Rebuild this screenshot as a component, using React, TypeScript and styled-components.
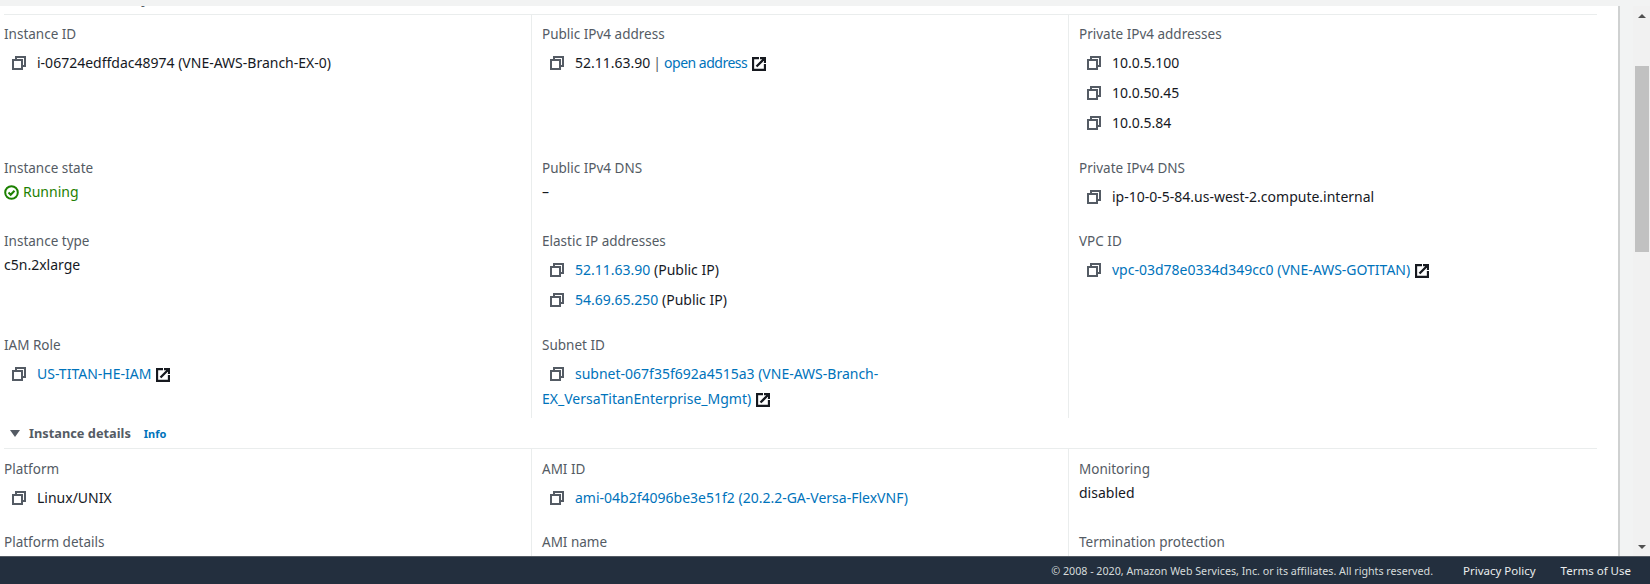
import React from "react";
import styled, { createGlobalStyle } from "styled-components";

const Global = createGlobalStyle`
  html, body { margin: 0; padding: 0; background: #fff; }
  body { font-family: "Noto Sans", "Liberation Sans", sans-serif; font-size: 14px; color: #16191f; }
`;

const Page = styled.div`
  width: 1650px; height: 584px; display: flex; flex-direction: column; overflow: hidden;
`;
const TopStrip = styled.div`height: 6px; background: #f2f3f3; flex: none;`;
const Main = styled.div`flex: 1; min-height: 0; display: flex;`;
const Content = styled.main`
  width: 1620px; flex: none; box-sizing: border-box; background: #fff; overflow: hidden;
  border-right: 2px solid #cfd1d1; padding: 0 21px 0 4px;
`;
const Gutter = styled.div`flex: 1; background: #f2f3f3;`;
const Track = styled.div`
  width: 17px; flex: none; background: #f1f1f1; display: flex; flex-direction: column; align-items: center;
`;
const ArrowUp = styled.div`
  margin-top: 8px; width: 0; height: 0; border-left: 4px solid transparent; border-right: 4px solid transparent;
  border-bottom: 4px solid #505050;
`;
const Thumb = styled.div`width: 14px; height: 186px; margin-top: 48px; background: #c1c1c1;`;
const ArrowDown = styled.div`
  margin-top: auto; margin-bottom: 7px; width: 0; height: 0; border-left: 4px solid transparent;
  border-right: 4px solid transparent; border-top: 4px solid #505050;
`;
const SectionHeader = styled.div<{ $first?: boolean }>`
  display: flex; align-items: center; height: 31px; box-sizing: border-box; padding: 0 0 0 6px;
  border-bottom: 1px solid #eaeded; margin-top: ${(p) => (p.$first ? "-22px" : "0")};
`;
const Caret = styled.span`
  width: 0; height: 0; margin-right: 9px; border-left: 5px solid transparent; border-right: 5px solid transparent;
  border-top: 7px solid #545b64;
`;
const SectionTitle = styled.h3`margin: 0; font-size: 12.8px; font-weight: 700; color: #545b64; line-height: 20px;`;
const InfoLink = styled.a`margin-left: 13px; font-size: 11px; font-weight: 700; color: #0073bb;`;
const Grid = styled.div<{ $rows: string }>`
  display: grid; grid-template-columns: 527px 537px 529px; grid-template-rows: ${(p) => p.$rows};
`;
const Cell = styled.div<{ $first?: boolean; $tight?: boolean }>`
  box-sizing: border-box; min-width: 0; padding: ${(p) => (p.$tight ? "10px" : "9px")} 0 0 ${(p) => (p.$first ? "0" : "10px")};
  border-left: ${(p) => (p.$first ? "0" : "1px solid #eaeded")};
`;
const Label = styled.div`line-height: 20px; font-size: 13.5px; color: #545b64;`;
const Plain = styled.div`margin-top: 4px; line-height: 20px; font-size: 14px; color: #16191f;`;
const CopyLine = styled.div`line-height: 25px; font-size: 14px; color: #16191f; margin-top: 6px; &+&{margin-top:5px;}`;
const Link = styled.a`color: #0073bb; text-decoration: none;`;
const OpenLink = styled(Link)`letter-spacing: -0.5px;`;
const Sep = styled.span`color: #545b64; margin: 0 3px;`;
const Status = styled.div`
  margin-top: 4px; line-height: 20px; font-size: 14px; color: #1d8102; display: flex; align-items: center; gap: 4px;
`;
const CopySvg = styled.svg`
  width: 14px; height: 14px; margin: 0 11px 0 8px; vertical-align: -2px; fill: none; stroke: #545b64; stroke-width: 2;
`;
const ExtSvg = styled.svg`
  width: 14px; height: 14px; margin-left: 5px; vertical-align: -3px; fill: none; stroke: #16191f; stroke-width: 2.3;
`;
const OkSvg = styled.svg`width: 15px; height: 15px; fill: none; stroke: #1d8102; stroke-width: 2; flex: none;`;
const Footer = styled.footer`
  height: 28px; flex: none; box-sizing: border-box; background: #232f3e; border-top: 1px solid #545b64;
  display: flex; align-items: center; justify-content: flex-end; padding-right: 19px;
`;
const Copyright = styled.span`font-size: 10.7px; color: #d5dbdb; margin-right: 30px;`;
const FootLink = styled.a`font-size: 11.5px; color: #eaeded; & + & { margin-left: 25px; }`;

const Copy = () => (
  <CopySvg viewBox="0 0 14 14"><rect x="1" y="4" width="9" height="9" /><path d="M4 4V1h9v9h-3" /></CopySvg>
);
const Ext = () => (
  <ExtSvg viewBox="0 0 14 14"><path d="M7 1H1v12h12V7" /><path d="M4.5 9.5L12 2M8 1h5v5" /></ExtSvg>
);

export default function App() {
  return (
    <Page>
      <Global />
      <TopStrip />
      <Main>
        <Content>
          <SectionHeader $first>
            <Caret /><SectionTitle>Instance summary</SectionTitle><InfoLink>Info</InfoLink>
          </SectionHeader>
          <Grid $rows="134px 73px 104px 92px">
            <Cell $first><Label>Instance ID</Label><CopyLine><Copy />i-06724edffdac48974 (VNE-AWS-Branch-EX-0)</CopyLine></Cell>
            <Cell><Label>Public IPv4 address</Label><CopyLine><Copy />52.11.63.90<Sep>|</Sep><OpenLink>open address</OpenLink><Ext /></CopyLine></Cell>
            <Cell><Label>Private IPv4 addresses</Label>
              <CopyLine><Copy />10.0.5.100</CopyLine>
              <CopyLine><Copy />10.0.50.45</CopyLine>
              <CopyLine><Copy />10.0.5.84</CopyLine>
            </Cell>
            <Cell $first><Label>Instance state</Label><Status><OkSvg viewBox="0 0 15 15"><circle cx="7.5" cy="7.5" r="6.3" /><path d="M4.5 7.5l2.2 2.2 3.8-4" /></OkSvg>Running</Status></Cell>
            <Cell><Label>Public IPv4 DNS</Label><Plain>–</Plain></Cell>
            <Cell><Label>Private IPv4 DNS</Label><CopyLine><Copy />ip-10-0-5-84.us-west-2.compute.internal</CopyLine></Cell>
            <Cell $first><Label>Instance type</Label><Plain>c5n.2xlarge</Plain></Cell>
            <Cell><Label>Elastic IP addresses</Label>
              <CopyLine><Copy /><Link>52.11.63.90</Link> (Public IP)</CopyLine>
              <CopyLine><Copy /><Link>54.69.65.250</Link> (Public IP)</CopyLine>
            </Cell>
            <Cell><Label>VPC ID</Label><CopyLine><Copy /><Link>vpc-03d78e0334d349cc0 (VNE-AWS-GOTITAN)</Link><Ext /></CopyLine></Cell>
            <Cell $first><Label>IAM Role</Label><CopyLine><Copy /><Link>US-TITAN-HE-IAM</Link><Ext /></CopyLine></Cell>
            <Cell><Label>Subnet ID</Label><CopyLine><Copy /><Link>subnet-067f35f692a4515a3 (VNE-AWS-Branch-<br />EX_VersaTitanEnterprise_Mgmt)</Link><Ext /></CopyLine></Cell>
            <Cell />
          </Grid>
          <SectionHeader>
            <Caret /><SectionTitle>Instance details</SectionTitle><InfoLink>Info</InfoLink>
          </SectionHeader>
          <Grid $rows="73px 40px">
            <Cell $first $tight><Label>Platform</Label><CopyLine><Copy />Linux/UNIX</CopyLine></Cell>
            <Cell $tight><Label>AMI ID</Label><CopyLine><Copy /><Link>ami-04b2f4096be3e51f2 (20.2.2-GA-Versa-FlexVNF)</Link></CopyLine></Cell>
            <Cell $tight><Label>Monitoring</Label><Plain>disabled</Plain></Cell>
            <Cell $first $tight><Label>Platform details</Label></Cell>
            <Cell $tight><Label>AMI name</Label></Cell>
            <Cell $tight><Label>Termination protection</Label></Cell>
          </Grid>
        </Content>
        <Gutter />
        <Track><ArrowUp /><Thumb /><ArrowDown /></Track>
      </Main>
      <Footer>
        <Copyright>© 2008 - 2020, Amazon Web Services, Inc. or its affiliates. All rights reserved.</Copyright>
        <FootLink>Privacy Policy</FootLink>
        <FootLink>Terms of Use</FootLink>
      </Footer>
    </Page>
  );
}
